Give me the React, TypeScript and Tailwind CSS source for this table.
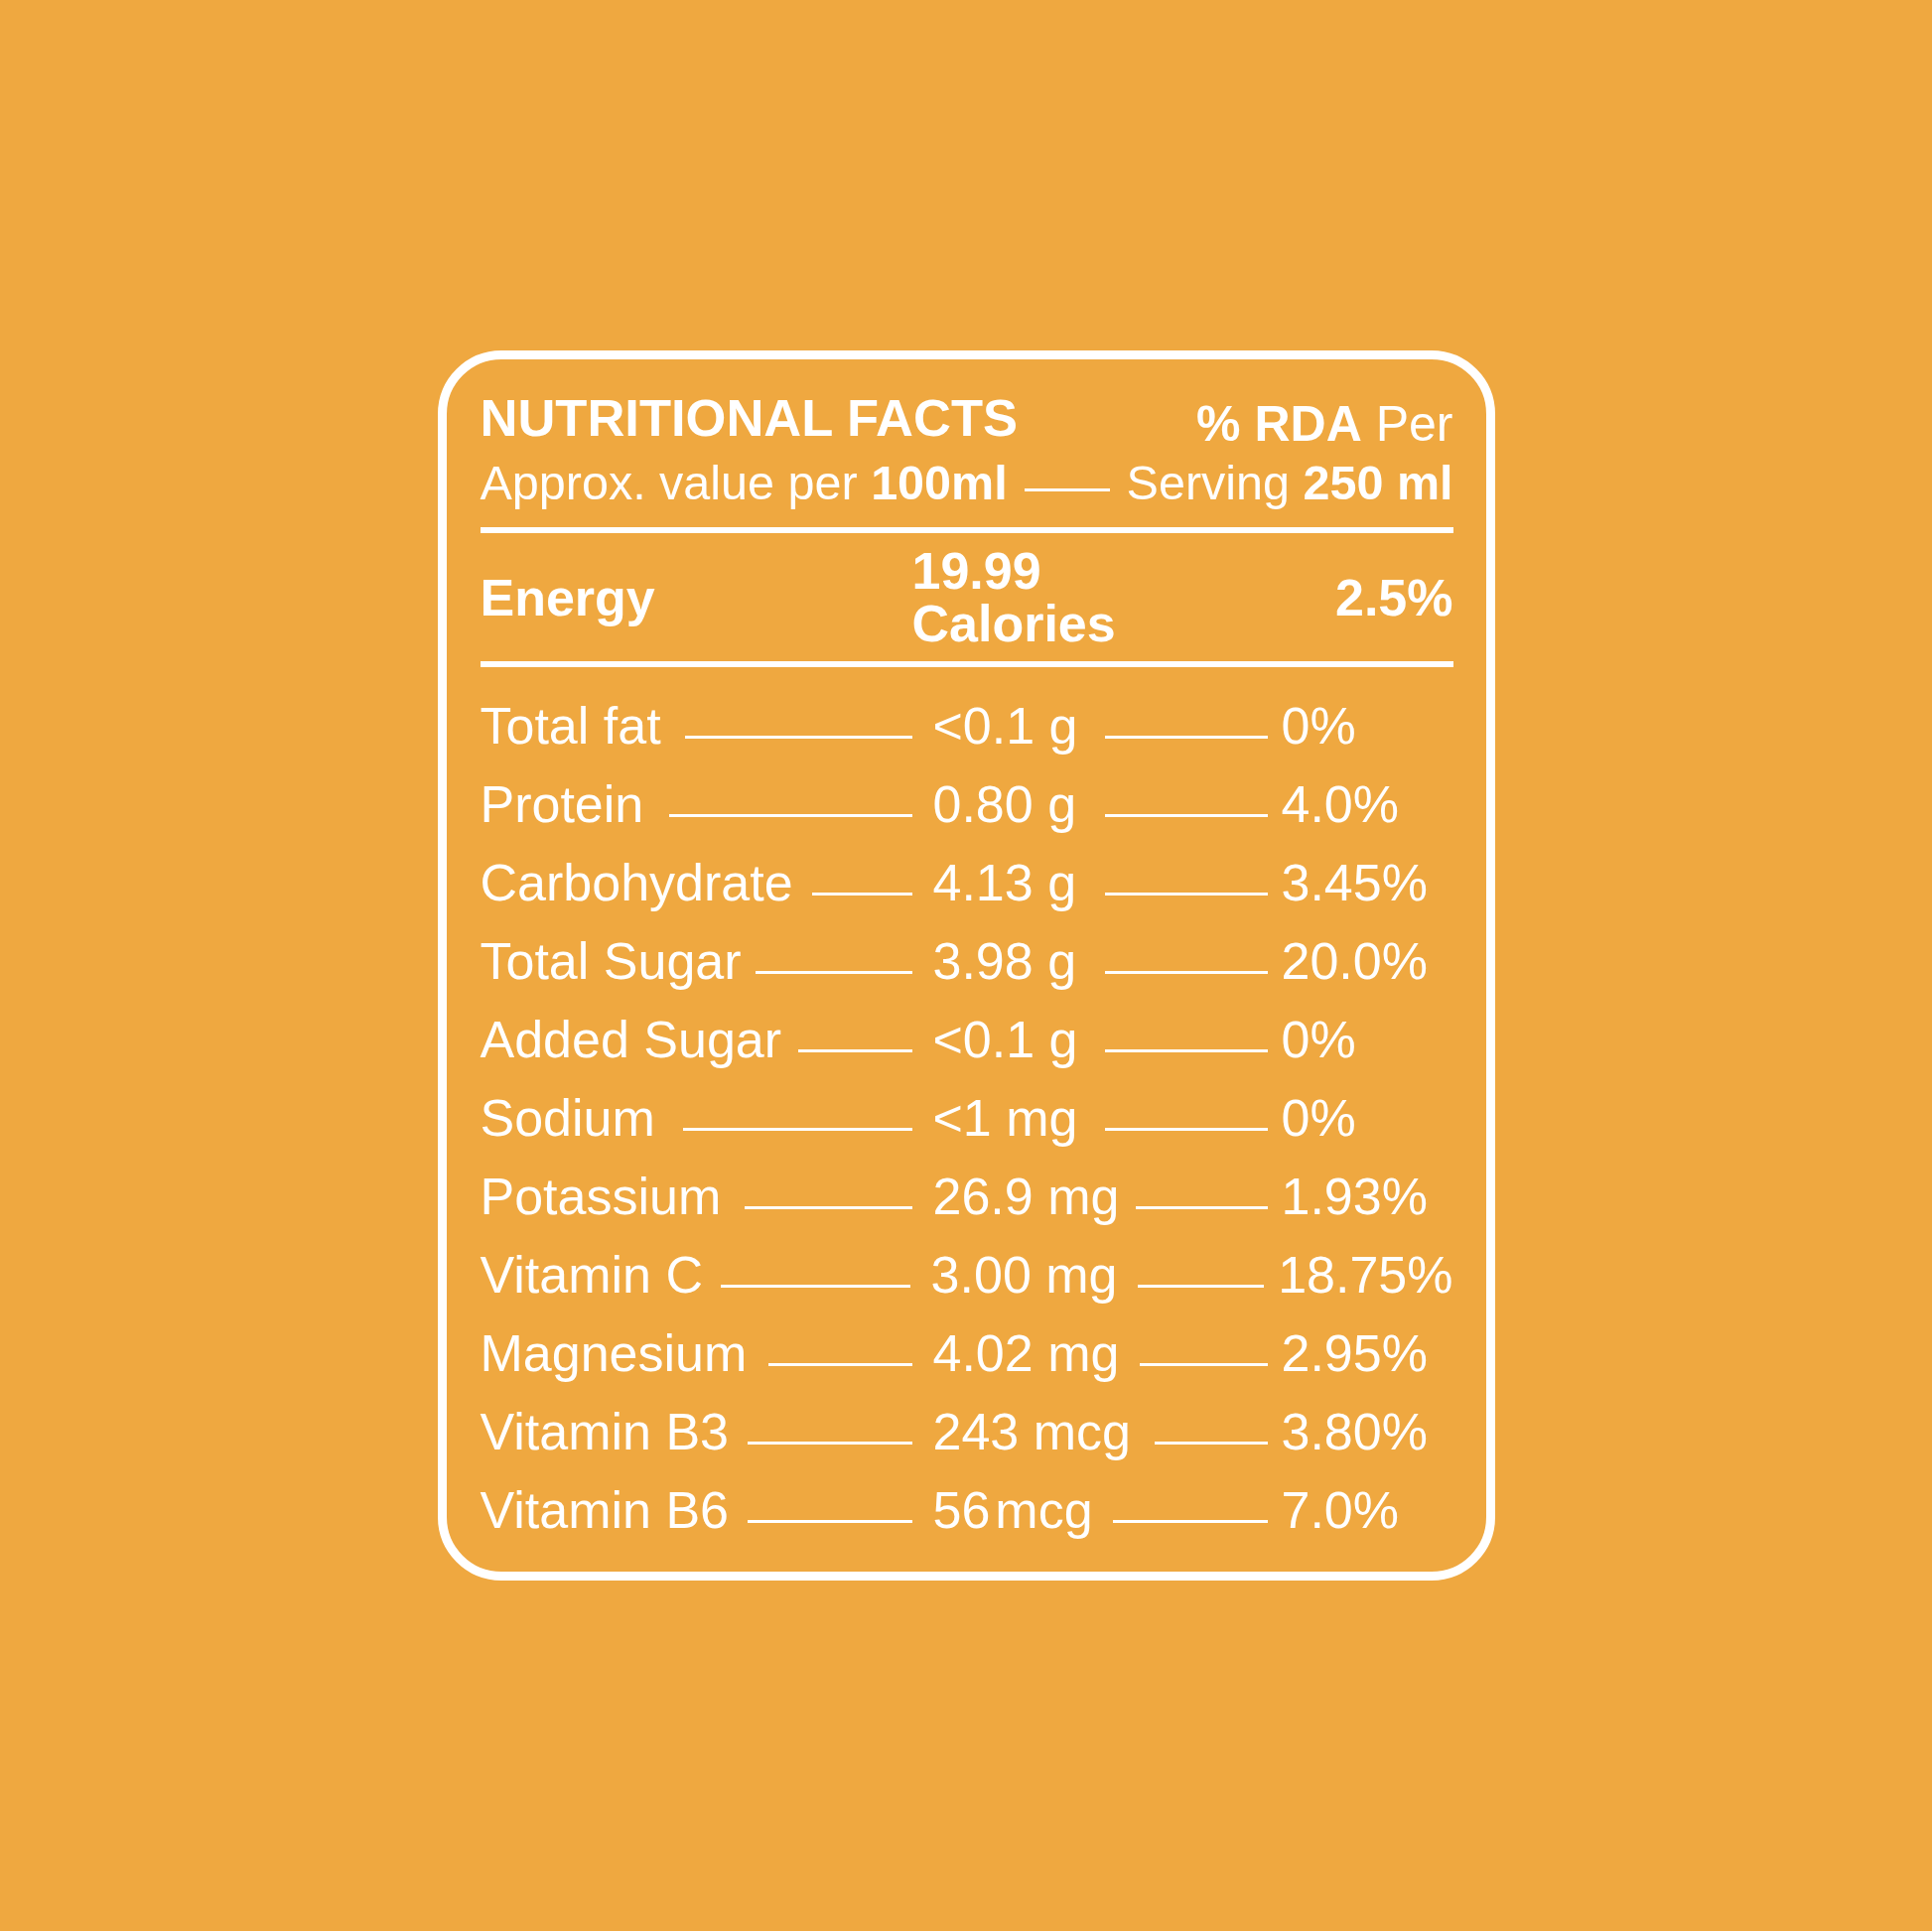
import React from 'react';

type Row = {
  name: string;
  value: React.ReactNode;
  rda: string;
  lead: string;
  tail: string;
};

const ROWS: Row[] = [
  { name: 'Total fat', value: '<0.1 g', rda: '0%', lead: 'w-[229px]', tail: 'w-[164px]' },
  { name: 'Protein', value: '0.80 g', rda: '4.0%', lead: 'w-[245px]', tail: 'w-[164px]' },
  { name: 'Carbohydrate', value: '4.13 g', rda: '3.45%', lead: 'w-[101px]', tail: 'w-[164px]' },
  { name: 'Total Sugar', value: '3.98 g', rda: '20.0%', lead: 'w-[158px]', tail: 'w-[164px]' },
  { name: 'Added Sugar', value: '<0.1 g', rda: '0%', lead: 'w-[115px]', tail: 'w-[164px]' },
  { name: 'Sodium', value: '<1 mg', rda: '0%', lead: 'w-[231px]', tail: 'w-[164px]' },
  { name: 'Potassium', value: '26.9 mg', rda: '1.93%', lead: 'w-[169px]', tail: 'w-[133px]' },
  { name: 'Vitamin C', value: '3.00 mg', rda: '18.75%', lead: 'w-[191px]', tail: 'w-[127px]' },
  { name: 'Magnesium', value: '4.02 mg', rda: '2.95%', lead: 'w-[145px]', tail: 'w-[129px]' },
  { name: 'Vitamin B3', value: '243 mcg', rda: '3.80%', lead: 'w-[166px]', tail: 'w-[114px]' },
  {
    name: 'Vitamin B6',
    value: (
      <>
        56<span className="ml-[5px]">mcg</span>
      </>
    ),
    rda: '7.0%',
    lead: 'w-[166px]',
    tail: 'w-[156px]',
  },
];

function NutrientRow({ row }: { row: Row }) {
  return (
    <div className="flex items-baseline text-[52px] leading-[79px]">
      <div className="flex w-[435px] items-baseline">
        <span className="flex-1 whitespace-nowrap">{row.name}</span>
        <div className={`${row.lead} h-[3px] -translate-y-[5px] bg-white`} />
      </div>
      <div className="flex w-[358px] items-baseline pl-[21px]">
        <span className="flex-1 whitespace-nowrap">{row.value}</span>
        <div className={`${row.tail} h-[3px] -translate-y-[5px] bg-white`} />
      </div>
      <span className="whitespace-nowrap pl-[14px]">{row.rda}</span>
    </div>
  );
}

export default function App() {
  return (
    <div className="flex h-[1945px] w-full items-center justify-center bg-[#efa840] font-['Liberation_Sans',Arial,Helvetica,sans-serif] text-white">
      <div className="w-[1065px] rounded-[64px] border-[9px] border-white pb-[22px] pl-[34px] pr-[33px] pt-[33px]">
        <div className="flex items-end justify-between">
          <h1 className="text-[52.5px] font-bold leading-[52px]">NUTRITIONAL FACTS</h1>
          <p className="-mb-[4px] text-[50px] leading-[48px]">
            <span className="font-bold">% RDA</span> Per
          </p>
        </div>

        <div className="mt-[15px] flex items-baseline text-[48.5px] leading-[48px]">
          <span className="whitespace-nowrap">
            Approx. value per <span className="font-bold">100ml</span>
          </span>
          <div className="mx-[17px] h-[3px] flex-1 -translate-y-[8px] bg-white" />
          <span className="whitespace-nowrap">
            Serving <span className="font-bold">250 ml</span>
          </span>
        </div>

        <div className="mt-[21px] h-[6px] bg-white" />

        <div className="flex h-[129px] items-center text-[52px] font-bold">
          <span className="w-[435px] leading-[52px]">Energy</span>
          <div className="flex-1 leading-[53px]">
            <div>19.99</div>
            <div>Calories</div>
          </div>
          <span className="leading-[52px]">2.5%</span>
        </div>

        <div className="h-[6px] bg-white" />

        <div className="mt-[20px]">
          {ROWS.map((row) => (
            <NutrientRow key={row.name} row={row} />
          ))}
        </div>
      </div>
    </div>
  );
}
